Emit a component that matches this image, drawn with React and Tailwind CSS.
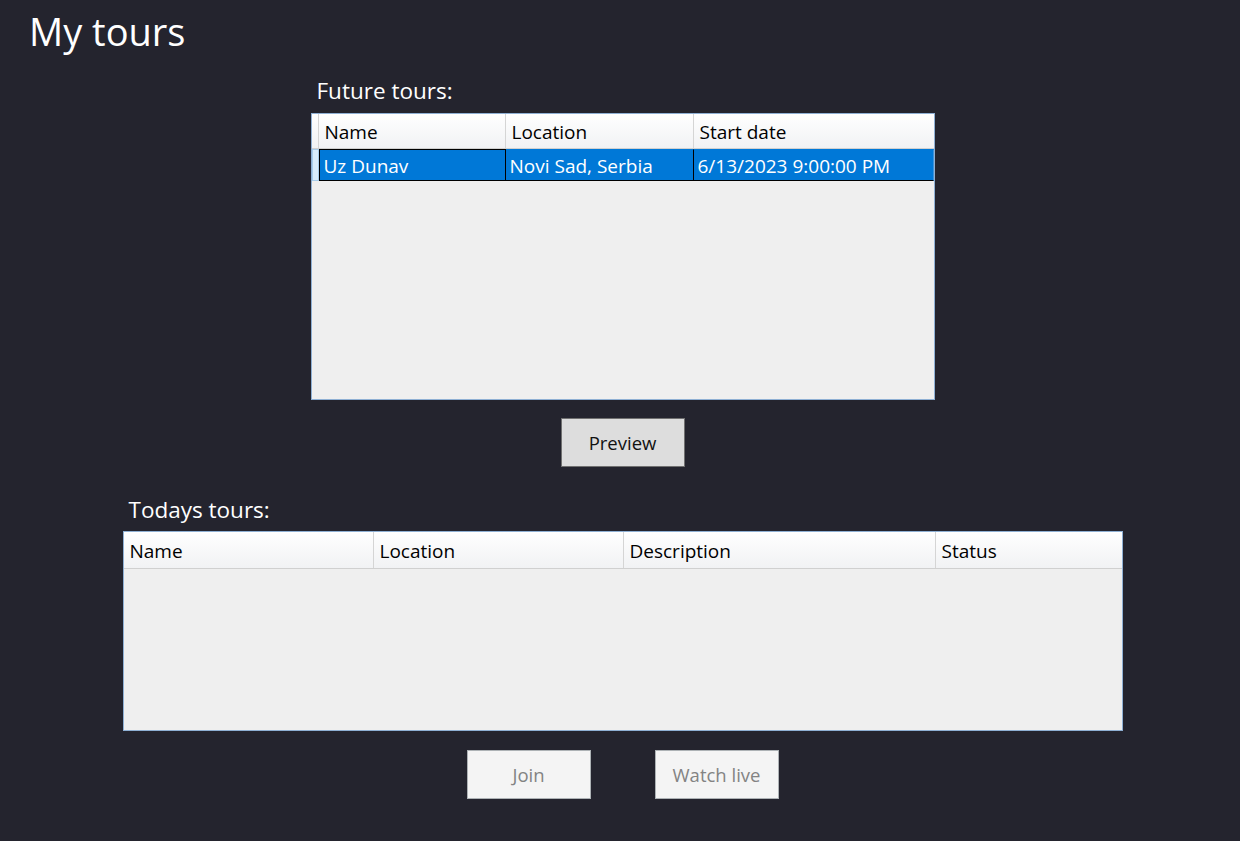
import React from 'react';

const font = { fontFamily: '"Open Sans", "Noto Sans", sans-serif' };

function HeaderCell({ children, className = '' }) {
  return (
    <div
      className={`h-full flex items-center pl-[6px] pt-[3px] border-r border-[#d5d5d5] bg-gradient-to-b from-white to-[#f1f2f4] text-black text-[19px] ${className}`}
    >
      {children}
    </div>
  );
}

function FutureGrid() {
  const cols = ['Name', 'Location', 'Start date'];
  return (
    <div className="w-[624px] h-[287px] border border-[#8fb0d4] bg-[#efefef] flex flex-col">
      <div className="h-[35px] flex border-b border-[#d0d0d0]">
        <div className="w-[7px] h-full bg-gradient-to-b from-white to-[#f1f2f4] border-r border-[#d5d5d5]" />
        <HeaderCell className="w-[187px]">{cols[0]}</HeaderCell>
        <HeaderCell className="w-[188px]">{cols[1]}</HeaderCell>
        <HeaderCell className="flex-1 border-r-0">{cols[2]}</HeaderCell>
      </div>
      <div className="h-[32px] flex">
        <div className="w-[7px] h-full bg-[#d9ecfa] border border-[#a9cdea]" />
        <div className="w-[187px] h-full bg-[#0078d7] border border-black flex items-center pl-[4px] pt-[2px] text-white text-[19px]">
          Uz Dunav
        </div>
        <div className="w-[188px] h-full bg-[#0078d7] border-t border-t-[#0078d7] border-b border-b-black border-r border-r-black flex items-center pl-[4px] pt-[2px] text-white text-[19px]">
          Novi Sad, Serbia
        </div>
        <div className="flex-1 h-full bg-[#0078d7] border-t border-t-[#0078d7] border-b border-b-black border-r border-r-[#3d94dc] flex items-center pl-[4px] pt-[2px] text-white text-[19px]">
          6/13/2023 9:00:00 PM
        </div>
      </div>
    </div>
  );
}

function TodayGrid() {
  return (
    <div className="w-[1000px] h-[200px] border border-[#8fb0d4] bg-[#efefef] flex flex-col">
      <div className="h-[37px] flex border-b border-[#d0d0d0]">
        <HeaderCell className="w-[250px]">Name</HeaderCell>
        <HeaderCell className="w-[250px]">Location</HeaderCell>
        <HeaderCell className="w-[312px]">Description</HeaderCell>
        <HeaderCell className="flex-1 border-r-0">Status</HeaderCell>
      </div>
    </div>
  );
}

export default function App() {
  return (
    <div className="w-[1240px] h-[841px] bg-[#24242e] flex flex-col" style={font}>
      <h1 className="pl-[29px] pt-[6px] h-[76px] text-white text-[38px] leading-[50px]">My tours</h1>

      <div className="flex flex-col items-center pl-[5px]">
        <div className="w-[624px] pl-[6px] h-[37px] text-white text-[22.5px] leading-[30px]">Future tours:</div>
        <FutureGrid />
        <button className="mt-[18px] w-[124px] h-[49px] bg-[#dddddd] border border-[#707070] text-[18.5px] text-[#111]">
          Preview
        </button>

        <div className="mt-[27px] w-[1000px] pl-[6px] h-[37px] text-white text-[22.5px] leading-[32px]">Todays tours:</div>
        <TodayGrid />

        <div className="mt-[19px] flex gap-[64px]">
          <button className="w-[124px] h-[49px] bg-[#f4f4f4] border border-[#adb2b5] text-[18.5px] text-[#838383]">
            Join
          </button>
          <button className="w-[124px] h-[49px] bg-[#f4f4f4] border border-[#adb2b5] text-[18.5px] text-[#838383]">
            Watch live
          </button>
        </div>
      </div>
    </div>
  );
}
